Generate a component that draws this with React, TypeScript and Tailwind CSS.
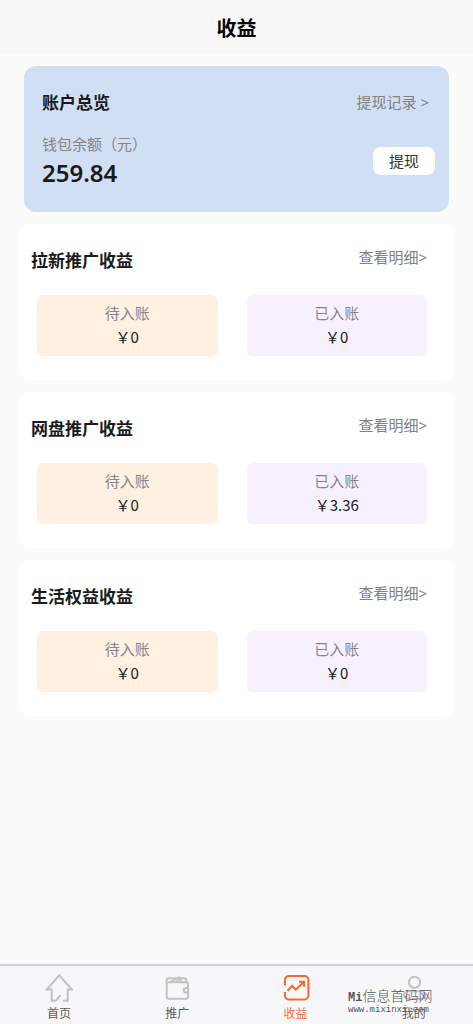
import type { ReactNode } from "react";
import clsx from "clsx";

const sections = [
  { title: "拉新推广收益", pending: "0", settled: "0" },
  { title: "网盘推广收益", pending: "0", settled: "3.36" },
  { title: "生活权益收益", pending: "0", settled: "0" },
];

const HomeIcon = () => (
  <path d="M11 26.7H6.7V15.5H1.7L14.3 1.3L26.8 15.5H22.7V26.7H18M11 26.7L15.6 20.8" />
);

const WalletIcon = () => (
  <>
    <path d="M25 13.5V10.2a2 2 0 0 0-2-2H3.7V22.8a2 2 0 0 0 2 2H23a2 2 0 0 0 2-2V19" />
    <path d="M3.7 8.2V6.2a2 2 0 0 1 2-2H21.5a1.6 1.6 0 0 1 1.6 1.6V8" />
    <path d="M7.5 7.8L16.4 3L18.8 7.8M12 7.8L17 5.2" strokeWidth="1.6" />
    <path d="M25.2 14H23a2.2 2.2 0 0 0 0 4.4H25.2Z" />
  </>
);

const ChartIcon = () => (
  <>
    <path d="M2.9 11.5V6a4 4 0 0 1 4-4H22.4a4 4 0 0 1 4 4V21.4a4 4 0 0 1-4 4H6.9a4 4 0 0 1-4-4V18" />
    <path d="M5.6 16.8L10.2 11.8L13.8 15.6L21.8 8" />
    <path d="M17 7.7H22.1V12.7" />
  </>
);

const PersonIcon = () => (
  <>
    <circle cx="14.5" cy="8.3" r="5.6" />
    <path d="M7.8 17.2H21.4a3.8 3.8 0 0 1 0 7.6H7.8a3.8 3.8 0 0 1 0-7.6Z" />
  </>
);

const tabs: { label: string; icon: ReactNode; active?: boolean }[] = [
  { label: "首页", icon: <HomeIcon /> },
  { label: "推广", icon: <WalletIcon /> },
  { label: "收益", icon: <ChartIcon />, active: true },
  { label: "我的", icon: <PersonIcon /> },
];

const AmountBox = ({
  label,
  amount,
  className,
}: {
  label: string;
  amount: string;
  className: string;
}) => (
  <div className={clsx("rounded-md pt-[6px] pb-[7px] text-center text-[15px] leading-6", className)}>
    <p className="text-[#868686]">{label}</p>
    <p className="font-['Noto_Sans_CJK_SC',sans-serif] text-[#1c1c1c]">￥{amount}</p>
  </div>
);

const EarningsCard = ({ title, pending, settled }: (typeof sections)[number]) => (
  <section className="rounded-xl bg-white pt-6 pb-6">
    <div className="flex items-start justify-between pl-3 pr-7">
      <h2 className="text-[17px] leading-[26px] font-bold text-[#1a1a1a]">{title}</h2>
      <a href="#" className="text-[15px] leading-[18px] text-[#808080]">
        查看明细&gt;
      </a>
    </div>
    <div className="mt-[21px] grid grid-cols-2 gap-[29px] pl-[18px] pr-7">
      <AmountBox label="待入账" amount={pending} className="bg-[#fff0e1]" />
      <AmountBox label="已入账" amount={settled} className="bg-[#f7f1ff]" />
    </div>
  </section>
);

export default function App() {
  return (
    <div className="flex min-h-screen flex-col bg-[#fbfbfb] font-['Noto_Sans','Noto_Sans_CJK_SC',sans-serif]">
      <header className="flex h-[54px] items-center justify-center bg-[#f8f8f8] pt-[3px]">
        <h1 className="text-[20px] leading-6 font-bold text-black">收益</h1>
      </header>

      <main className="flex-1 pb-6">
        <section className="mx-6 mt-3 rounded-xl bg-[#d1dff4] pt-6 pb-[22px] pl-[18px] pr-[14px]">
          <div className="flex items-start justify-between pr-[6px]">
            <h2 className="text-[17px] leading-[26px] font-bold text-[#1a1a1a]">账户总览</h2>
            <a href="#" className="text-[15px] leading-6 text-[#808080]">
              提现记录 &gt;
            </a>
          </div>
          <div className="mt-4 flex items-center justify-between">
            <div>
              <p className="text-[15px] leading-6 text-[#868686]">钱包余额（元）</p>
              <p className="text-[24px] leading-[34px] font-semibold text-[#1a1a1a]">259.84</p>
            </div>
            <button
              type="button"
              className="h-7 rounded-lg bg-white px-4 text-[15px] leading-6 text-[#333333]"
            >
              提现
            </button>
          </div>
        </section>

        <div className="mt-3 mr-[18px] ml-[19px] flex flex-col gap-3">
          {sections.map((section) => (
            <EarningsCard key={section.title} {...section} />
          ))}
        </div>
      </main>

      <nav className="relative grid grid-cols-4 border-t-2 border-[#d3d3d5] bg-[#f7f7fa]">
        {tabs.map(({ label, icon, active }) => (
          <a
            key={label}
            href="#"
            className={clsx(
              "flex flex-col items-center gap-1 pt-2 pb-[2px]",
              active ? "text-[#f4692f]" : "text-[#c2c2c2]"
            )}
          >
            <svg
              viewBox="0 0 28 28"
              className="size-7"
              fill="none"
              stroke="currentColor"
              strokeWidth="2"
              aria-hidden="true"
            >
              {icon}
            </svg>
            <span
              className={clsx("text-[12px] leading-4", active ? "text-[#f0703c]" : "text-[#5c5c5c]")}
            >
              {label}
            </span>
          </a>
        ))}
        <div className="pointer-events-none absolute top-[23px] right-10 w-[85px] whitespace-nowrap text-[#555555]">
          <p className="font-['Liberation_Mono','Noto_Sans_CJK_SC',monospace] text-[14px] leading-4 font-light">
            <span className="text-[12px] font-bold">Mi</span>信息首码网
          </p>
          <p className="font-['Liberation_Mono',monospace] text-[9px] leading-2">www.mixinxi.com</p>
        </div>
      </nav>
    </div>
  );
}
